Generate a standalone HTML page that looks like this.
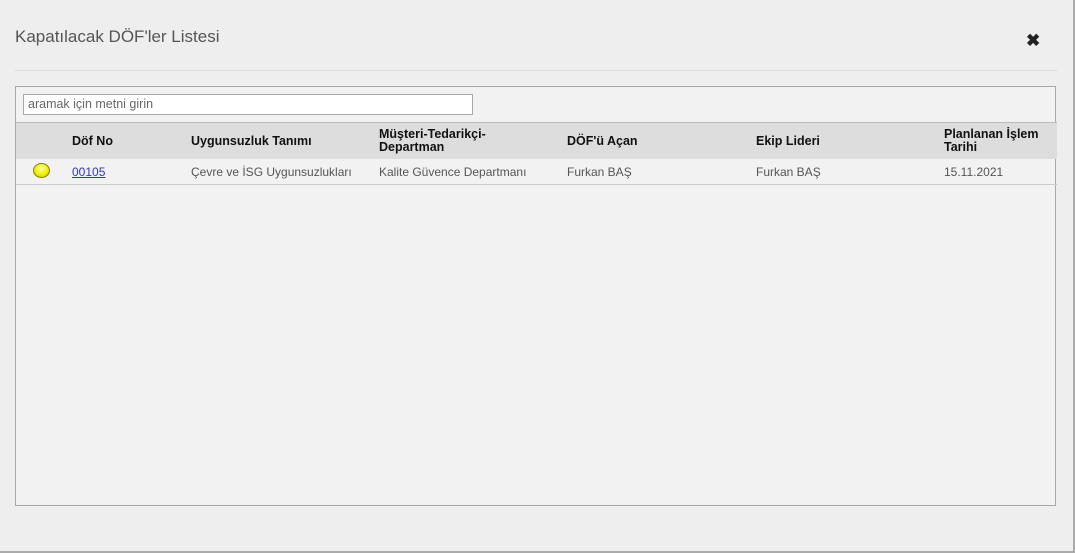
<!DOCTYPE html>
<html><head><meta charset="utf-8"><style>
*{margin:0;padding:0;box-sizing:border-box}
body{width:1075px;height:553px;background:#aaa;font-family:"Liberation Sans",Tahoma,sans-serif;overflow:hidden;position:relative}
.modal{position:absolute;left:0;top:0;width:1073px;height:551px;background:#eeeeee}
.title{position:absolute;left:15px;top:27px;font-size:17px;color:#555}
.close{position:absolute;left:1026px;top:31px;font-size:17px;font-weight:bold;color:#222}
.sep{position:absolute;left:15px;top:70px;width:1042px;height:1px;background:#dcdcdc}
.box{position:absolute;left:15px;top:86px;width:1041px;height:420px;background:#f2f2f2;border:1px solid #a8a8a8}
.search{position:absolute;left:7px;top:7px;width:450px;height:21px;background:#fff;border:1px solid #a8a8a8;font-size:12.5px;color:#666;padding:3px 4px;line-height:13px}
.hdr{position:absolute;left:0;top:35px;width:1041px;height:37px;background:#dddddd;border-top:1px solid #bbb}
.row{position:absolute;left:0;top:72px;width:1041px;height:26px;border-bottom:1px solid #ccc;font-size:12px;color:#555}
.h{position:absolute;font-size:12.5px;font-weight:bold;color:#111;line-height:13px}
.c{position:absolute;top:7px;line-height:13px}
a{color:#3333cc;text-decoration:underline}
.dot{position:absolute;left:17px;top:4px;width:17px;height:15px;border-radius:50%;background:radial-gradient(circle at 50% 35%,#ffff99,#eeee00 60%,#b0a000);border:1px solid #8a8000}
</style></head><body>
<div class="modal">
<div class="title">Kapatılacak DÖF'ler Listesi</div>
<div class="close">✖</div>
<div class="sep"></div>
<div class="box">
<div class="search">aramak için metni girin</div>
<div class="hdr">
<div class="h" style="left:56px;top:12px">Döf No</div>
<div class="h" style="left:175px;top:12px">Uygunsuzluk Tanımı</div>
<div class="h" style="left:363px;top:5px">Müşteri-Tedarikçi-<br>Departman</div>
<div class="h" style="left:551px;top:12px">DÖF'ü Açan</div>
<div class="h" style="left:740px;top:12px">Ekip Lideri</div>
<div class="h" style="left:928px;top:5px">Planlanan İşlem<br>Tarihi</div>
</div>
<div class="row">
<div class="dot"></div>
<div class="c" style="left:56px"><a>00105</a></div>
<div class="c" style="left:175px">Çevre ve İSG Uygunsuzlukları</div>
<div class="c" style="left:363px">Kalite Güvence Departmanı</div>
<div class="c" style="left:551px">Furkan BAŞ</div>
<div class="c" style="left:740px">Furkan BAŞ</div>
<div class="c" style="left:928px">15.11.2021</div>
</div>
</div>
</div>
</body></html>
